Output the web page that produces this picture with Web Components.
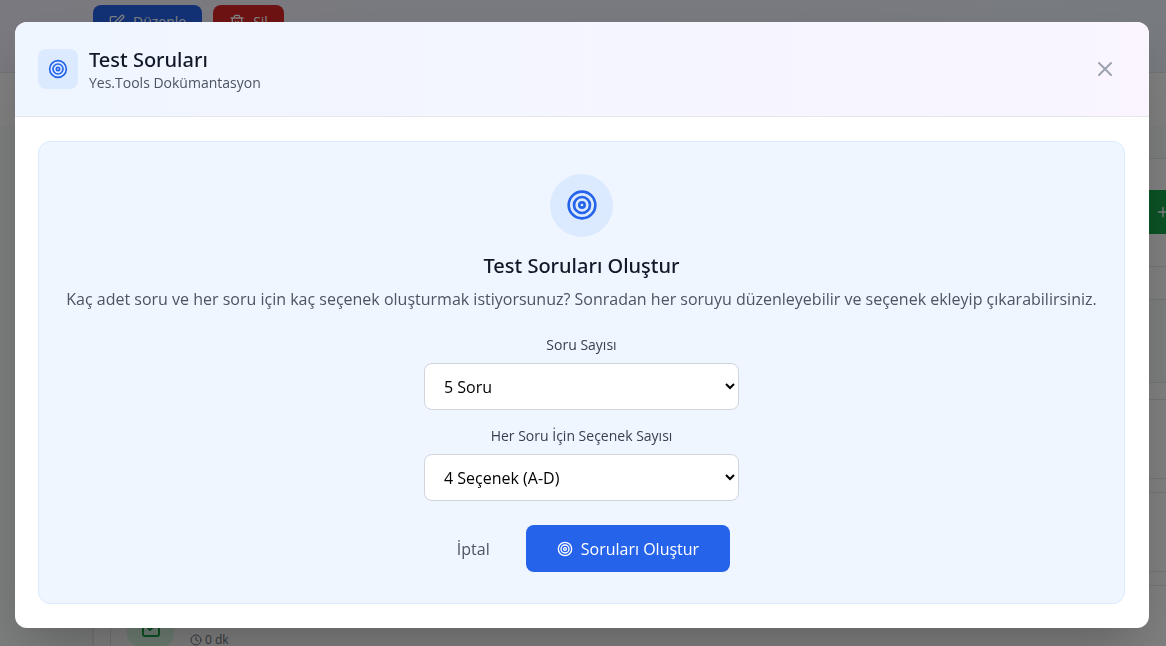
<!DOCTYPE html>
<html lang="tr">
<head>
<meta charset="utf-8">
<meta name="viewport" content="width=device-width, initial-scale=1">
<title>Test Soruları</title>
<style>
  html, body { margin: 0; height: 100%; }
  body { font: 16px/24px "Open Sans", "Noto Sans", sans-serif; color: #111827; overflow: hidden; }
</style>
</head>
<body>
<quiz-app></quiz-app>

<template id="t-icon">
  <style>
    :host { display: block; flex: none; width: var(--icon-size, 16px); height: var(--icon-size, 16px); }
    svg { display: block; width: 100%; height: 100%; fill: none; stroke: currentColor; stroke-width: 2; stroke-linecap: round; stroke-linejoin: round; }
  </style>
  <svg viewBox="0 0 24 24" aria-hidden="true"></svg>
</template>

<template id="t-page">
  <style>
    :host { display: block; height: 100%; overflow: hidden; background: #f9fafb; }
    header { box-sizing: border-box; height: 73px; padding: 5px 93px 0; display: flex; gap: 11px; align-items: flex-start; background: linear-gradient(90deg, #f5f3ff, #eff6ff); border-bottom: 1px solid #e5e7eb; box-shadow: 0 1px 2px rgba(0,0,0,.05); }
    button { font: inherit; border: 0; color: #fff; display: flex; align-items: center; gap: 8px; border-radius: 8px; }
    header button { height: 34px; padding: 0 16px; font-size: 14px; }
    .edit { background: #2563eb; }
    .delete { background: #dc2626; }
    nav { height: 53px; background: #fff; }
    main { margin-left: 93px; width: 1280px; background: #fff; }
    .intro { box-sizing: border-box; height: 33px; border-bottom: 1px solid #e5e7eb; background: #f9fafb; }
    .tools { display: flex; padding: 31px 0 32px; }
    .add { height: 44px; margin-left: 1040px; background: #16a34a; padding: 0 22px; }
    .list { border: 1px solid #e5e7eb; padding: 32px 16px; background: #fff; display: grid; gap: 13px; box-shadow: 0 1px 2px rgba(0,0,0,.1); }
    .row { box-sizing: border-box; height: 80px; border: 1px solid #e5e7eb; padding: 12px 16px 18px; display: flex; gap: 16px; border-radius: 8px; }
    .row:first-child { height: 84px; margin-bottom: 3px; background: #f9fafb; }
    .badge { box-sizing: border-box; width: 47px; height: 48px; padding-top: 8px; border-radius: 12px; background: #dcfce7; color: #16a34a; display: grid; place-items: center; --icon-size: 24px; }
    .time { align-self: flex-end; display: flex; align-items: center; gap: 3px; height: 12px; font-size: 12px; line-height: 12px; color: #6b7280; --icon-size: 12px; }
  </style>
  <header>
    <button class="edit"><line-icon name="edit"></line-icon>Düzenle</button>
    <button class="delete"><line-icon name="trash"></line-icon>Sil</button>
  </header>
  <nav></nav>
  <main>
    <div class="intro"></div>
    <div class="tools"><button class="add" aria-label="Ekle"><line-icon name="plus"></line-icon></button></div>
    <div class="list">
      <div class="row"></div><div class="row"></div><div class="row"></div>
      <div class="row">
        <div class="badge"><line-icon name="check"></line-icon></div>
        <div class="time"><line-icon name="clock"></line-icon>0 dk</div>
      </div>
    </div>
  </main>
</template>

<template id="t-modal">
  <style>
    :host { position: fixed; inset: 0; box-sizing: border-box; padding: 16px 17px 12px 15px; display: flex; align-items: center; justify-content: center; background: rgba(0,0,0,.5); }
    section { width: 100%; max-width: 1134px; border-radius: 12px; overflow: hidden; background: #fff; box-shadow: 0 25px 50px -12px rgba(0,0,0,.25); }
    header { display: flex; align-items: center; gap: 11px; padding: 24px 24px 24px 23px; border-bottom: 1px solid #e5e7eb; background: linear-gradient(90deg, #eff6ff, #faf5ff); }
    .tile { width: 40px; height: 40px; display: grid; place-items: center; border-radius: 8px; background: #dbeafe; color: #2563eb; --icon-size: 20px; }
    .titles { flex: 1; }
    h2 { margin: 0; font: 500 20px/28px "Noto Sans", sans-serif; }
    p { margin: 0; font-size: 14px; line-height: 18px; color: #4b5563; }
    button { border: 0; padding: 8px; background: none; color: #9ca3af; --icon-size: 24px; }
    .body { padding: 24px 24px 24px 23px; }
  </style>
  <section role="dialog" aria-modal="true" aria-labelledby="title">
    <header>
      <div class="tile"><line-icon name="target"></line-icon></div>
      <div class="titles"><h2 id="title"><slot name="title"></slot></h2><p><slot name="subtitle"></slot></p></div>
      <button aria-label="Kapat"><line-icon name="close"></line-icon></button>
    </header>
    <div class="body"><slot></slot></div>
  </section>
</template>

<template id="t-field">
  <style>
    :host { display: block; }
    label { display: block; margin-bottom: 8px; font-size: 14px; line-height: 20px; color: #374151; }
    select { display: block; box-sizing: border-box; width: 100%; height: 47px; padding: 0 15px; border: 1px solid #d1d5db; border-radius: 8px; background: #fff; color: #000; font: inherit; }
  </style>
  <label for="choice"></label>
  <select id="choice"></select>
</template>

<template id="t-form">
  <style>
    :host { display: block; padding: 32px 20px 31px; border: 1px solid #dbeafe; border-radius: 12px; background: #eff6ff; text-align: center; }
    .round { box-sizing: border-box; width: 63px; height: 63px; margin: 0 auto 15px; display: flex; justify-content: center; padding-top: 15px; border-radius: 50%; background: #dbeafe; color: #2563eb; --icon-size: 32px; }
    h3 { margin: 0 0 7px; font: 500 20px/28px "Noto Sans", sans-serif; }
    p { margin: 0 0 24px; color: #4b5563; }
    .fields { display: grid; gap: 16px; max-width: 315px; margin: 0 auto 24px; }
    .actions { display: flex; justify-content: center; gap: 12px; }
    button { height: 47px; border: 0; border-radius: 8px; font: inherit; display: flex; align-items: center; gap: 8px; }
    .cancel { padding: 0 24px; background: none; color: #4b5563; }
    .create { padding: 0 31px; background: #2563eb; color: #fff; }
  </style>
  <div class="round"><line-icon name="target"></line-icon></div>
  <h3>Test Soruları Oluştur</h3>
  <p>Kaç adet soru ve her soru için kaç seçenek oluşturmak istiyorsunuz? Sonradan her soruyu düzenleyebilir ve seçenek ekleyip çıkarabilirsiniz.</p>
  <div class="fields">
    <select-field label="Soru Sayısı" value="5 Soru"></select-field>
    <select-field label="Her Soru İçin Seçenek Sayısı" value="4 Seçenek (A-D)"></select-field>
  </div>
  <div class="actions">
    <button class="cancel">İptal</button>
    <button class="create"><line-icon name="target"></line-icon>Soruları Oluştur</button>
  </div>
</template>

<template id="t-app">
  <style>:host { display: block; height: 100%; }</style>
  <course-page></course-page>
  <modal-dialog>
    <span slot="title">Test Soruları</span>
    <span slot="subtitle">Yes.Tools Dokümantasyon</span>
    <question-form></question-form>
  </modal-dialog>
</template>

<script>
  const ICONS = {
    target: '<circle cx="12" cy="12" r="10"/><circle cx="12" cy="12" r="6"/><circle cx="12" cy="12" r="2"/>',
    close: '<path d="M18 6 6 18M6 6l12 12"/>',
    plus: '<path d="M5 12h14M12 5v14"/>',
    edit: '<path d="M11 4H4a2 2 0 0 0-2 2v14a2 2 0 0 0 2 2h14a2 2 0 0 0 2-2v-7"/><path d="M18.5 2.5a2.12 2.12 0 0 1 3 3L12 15l-4 1 1-4z"/>',
    trash: '<path d="M3 6h18M19 6v14a2 2 0 0 1-2 2H7a2 2 0 0 1-2-2V6M8 6V4a2 2 0 0 1 2-2h4a2 2 0 0 1 2 2v2M10 11v6M14 11v6"/>',
    check: '<rect x="4" y="4" width="16" height="18" rx="2"/><path d="m9 14 2 2 4-4"/>',
    clock: '<circle cx="12" cy="12" r="10"/><path d="M12 6v6l4 2"/>'
  };

  class TemplateElement extends HTMLElement {
    constructor() {
      super();
      this.attachShadow({ mode: 'open' })
        .append(document.getElementById(this.constructor.template).content.cloneNode(true));
    }
  }

  customElements.define('line-icon', class extends TemplateElement {
    static template = 't-icon';
    connectedCallback() {
      this.shadowRoot.querySelector('svg').innerHTML = ICONS[this.getAttribute('name')];
    }
  });
  customElements.define('select-field', class extends TemplateElement {
    static template = 't-field';
    connectedCallback() {
      this.shadowRoot.querySelector('label').textContent = this.getAttribute('label');
      this.shadowRoot.querySelector('select').replaceChildren(new Option(this.getAttribute('value')));
    }
  });
  customElements.define('course-page', class extends TemplateElement { static template = 't-page'; });
  customElements.define('modal-dialog', class extends TemplateElement { static template = 't-modal'; });
  customElements.define('question-form', class extends TemplateElement { static template = 't-form'; });
  customElements.define('quiz-app', class extends TemplateElement { static template = 't-app'; });
</script>
</body>
</html>
